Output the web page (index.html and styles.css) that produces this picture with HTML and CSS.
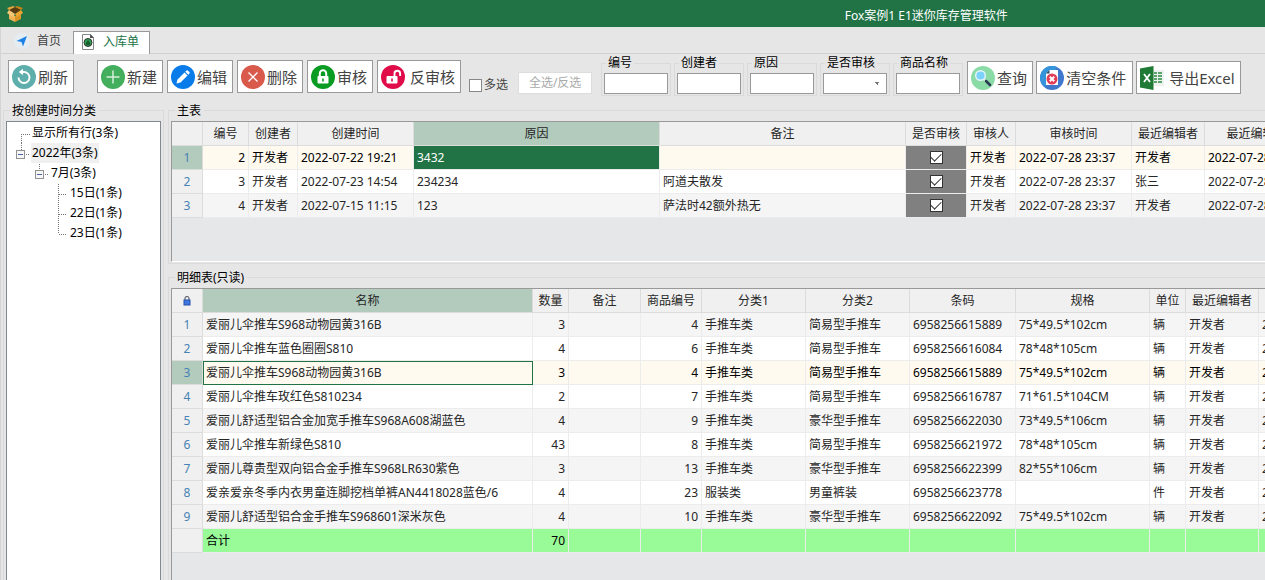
FILE: index.html
```html
<!DOCTYPE html>
<html lang="zh-CN">
<head>
<meta charset="utf-8">
<title>Fox案例1 E1迷你库存管理软件</title>
<link rel="stylesheet" href="styles.css">
</head>
<body>
<header class="titlebar">
  <svg class="app-icon" width="16" height="16" viewBox="0 0 16 16"><path d="M2 7l6 3v6l-6-3z" fill="#f0b455"/><path d="M8 10l6-3v6l-6 3z" fill="#d99425"/><path d="M2 4l6-3 6 3-6 4z" fill="#5a3a10"/><path d="M2 4l6 4-2 3-6-4z" fill="#f8c878"/><path d="M14 4L8 8l2 3 6-4z" fill="#eba52f"/><path d="M2 4L0 2l6-2 2 1z" fill="#e9a63c"/><path d="M14 4l2-2-6-2-2 1z" fill="#c98218"/></svg>
  <h1 class="app-title">Fox案例1 E1迷你库存管理软件</h1>
</header>
<div class="window">
  <nav class="tabs">
    <button class="tab"><svg width="16" height="16" viewBox="0 0 16 16"><circle cx="8" cy="8" r="8" fill="#e6edf2"/><path d="M13 3L2.500 8l5 1 1.500 4.500z" fill="#1c82e8"/></svg>首页</button>
    <button class="tab active"><svg width="16" height="16" viewBox="0 0 16 16"><path d="M2.500.5h8l3 3v12h-11z" fill="#fff" stroke="#888"/><path d="M10 0l4 4h-4z" fill="#555"/><circle cx="8" cy="8.500" r="4" fill="#2f9e4f" stroke="#333"/><path d="M6 9l2-3 2 3v2H6z" fill="#165c2e"/></svg>入库单</button>
  </nav>
  <div class="toolbar">
    <button class="btn"><svg width="24" height="24" viewBox="0 0 24 24"><circle cx="12" cy="12" r="12" fill="#5eaeab"/><path d="M6.500 12.500a5.500 5.500 0 1 0 5.500-5.500H9.500" fill="none" stroke="#fff" stroke-width="1.900"/><path d="M11 3.800L6.800 7 11 10.200z" fill="#fff"/></svg>刷新</button>
    <button class="btn first-edit"><svg width="24" height="24" viewBox="0 0 24 24"><circle cx="12" cy="12" r="12" fill="#43ae5c"/><path d="M12 5.500v13M5.500 12h13" stroke="#d6f0dc" stroke-width="1.500"/></svg>新建</button>
    <button class="btn"><svg width="24" height="24" viewBox="0 0 24 24"><circle cx="12" cy="12" r="12" fill="#0a7cea"/><path d="M5.500 18.500l1-4 7-7 3 3-7 7zM14.300 6.700l1.200-1.200q.8-.5 1.500.2l1.400 1.400q.6.7.1 1.400l-1.200 1.200z" fill="#fff"/></svg>编辑</button>
    <button class="btn"><svg width="24" height="24" viewBox="0 0 24 24"><circle cx="12" cy="12" r="12" fill="#d9594a"/><path d="M7.500 7.500l9 9M16.500 7.500l-9 9" stroke="#fff" stroke-width="1.300"/></svg>删除</button>
    <button class="btn"><svg width="24" height="24" viewBox="0 0 24 24"><circle cx="12" cy="12" r="12" fill="#0a9b22"/><rect x="6.500" y="11" width="11" height="7.500" rx="1" fill="#fff"/><path d="M8.800 11V8.500a3.200 3.200 0 0 1 6.400 0V11" fill="none" stroke="#fff" stroke-width="2"/><path d="M12 13.500v3" stroke="#0a9b22" stroke-width="1.600"/></svg>审核</button>
    <button class="btn roomy"><svg width="24" height="24" viewBox="0 0 24 24"><circle cx="12" cy="12" r="12" fill="#df0c49"/><rect x="5.500" y="11" width="11" height="7.500" rx="1" fill="#fff"/><path d="M13.500 11V8.500a2.800 2.800 0 0 1 5.600 0V11" fill="none" stroke="#fff" stroke-width="1.900"/><path d="M11 13.500v3" stroke="#df0c49" stroke-width="1.600"/></svg>反审核</button>
    <label class="multi"><input type="checkbox" class="box">多选</label>
    <button class="btn-small" disabled>全选/反选</button>
    <div class="fields">
      <div class="field"><label for="f-no">编号</label><input id="f-no" type="text"></div>
      <div class="field"><label for="f-creator">创建者</label><input id="f-creator" type="text"></div>
      <div class="field"><label for="f-reason">原因</label><input id="f-reason" type="text"></div>
      <div class="field"><label for="f-audit">是否审核</label><select id="f-audit"><option></option></select></div>
      <div class="field"><label for="f-name">商品名称</label><input id="f-name" type="text"></div>
    </div>
    <div class="queries">
      <button class="btn"><svg width="24" height="24" viewBox="0 0 24 24"><circle cx="12" cy="12" r="12" fill="#8bdba6"/><path d="M13.500 13.500l2 2" stroke="#fff" stroke-width="2"/><path d="M15 15l4 4" stroke="#2b3d55" stroke-width="2.600" stroke-linecap="round"/><circle cx="9.500" cy="9.500" r="4.800" fill="#7cd2fa" stroke="#e6f5fb" stroke-width="1.400"/></svg>查询</button>
      <button class="btn clear"><svg width="24" height="24" viewBox="0 0 24 24"><circle cx="12" cy="12" r="12" fill="#3f78cc"/><path d="M0 12A12 12 0 0 1 17 1L5 21A12 12 0 0 1 0 12z" fill="#3594da"/><path d="M9.500 4H18v15H6V7.500z" fill="#fff"/><path d="M6 7.500h3.500V4z" fill="#31475e"/><circle cx="12" cy="13" r="5.500" fill="#e33d55"/><path d="M9.800 10.800l4.400 4.400M14.200 10.800l-4.400 4.400" stroke="#fff" stroke-width="2"/></svg>清空条件</button>
      <button class="btn roomy"><svg width="24" height="24" viewBox="0 0 24 24"><path d="M13 4h11v16H13z" fill="#edf2ee"/><path d="M14 7h3M14 10h3M14 13h3M14 16h3M18 7h4M18 10h4M18 13h4M18 16h4" stroke="#2a8a42" stroke-width="1.500"/><path d="M0 2.500L13.500 0v24L0 21.500z" fill="#1f7a35"/><path d="M4 8l6 8M10 8l-6 8" stroke="#fff" stroke-width="1.800"/></svg>导出Excel</button>
    </div>
  </div>
  <main class="content">
    <section class="group side">
      <h2>按创建时间分类</h2>
      <div class="tree">
        <div class="node"><svg width="24" height="20"><path d="M14.500 11v9M14 11.500h9" class="dots"/></svg><span>显示所有行(3条)</span></div>
        <div class="node selected"><svg width="24" height="20"><path d="M14.500 0v7M19 11.500h4" class="dots"/><rect x="9.500" y="7.500" width="8" height="8" class="toggle"/><path d="M11 11.500h5" class="minus"/></svg><span>2022年(3条)</span></div>
        <div class="node"><svg width="43" height="20"><path d="M32.500 1v6M38 11.500h4" class="dots"/><rect x="28.500" y="7.500" width="8" height="8" class="toggle"/><path d="M30 11.500h5" class="minus"/></svg><span>7月(3条)</span></div>
        <div class="node"><svg width="62" height="20"><path d="M51.500 1v19M52 11.500h8" class="dots"/></svg><span>15日(1条)</span></div>
        <div class="node"><svg width="62" height="20"><path d="M51.500 1v19M52 11.500h8" class="dots"/></svg><span>22日(1条)</span></div>
        <div class="node"><svg width="62" height="20"><path d="M51.500 1v10M52 11.500h8" class="dots"/></svg><span>23日(1条)</span></div>
      </div>
    </section>
    <div class="tables">
      <section class="group">
        <h2>主表</h2>
        <div class="grid main-grid">
          <table class="t-main">
            <colgroup><col class="w31"><col class="w46"><col class="w49"><col class="w116"><col class="w246"><col class="w246"><col class="w61"><col class="w49"><col class="w116"><col class="w73"><col class="w116"></colgroup>
            <thead><tr><th></th><th>编号</th><th>创建者</th><th>创建时间</th><th class="on">原因</th><th>备注</th><th>是否审核</th><th>审核人</th><th>审核时间</th><th>最近编辑者</th><th>最近编辑时间</th></tr></thead>
            <tbody>
            <tr class="current"><th>1</th><td class="n">2</td><td>开发者</td><td>2022-07-22 19:21</td><td class="cell-on">3432</td><td></td><td class="chk"><input type="checkbox" class="box" aria-label="是否审核" checked></td><td>开发者</td><td>2022-07-28 23:37</td><td>开发者</td><td>2022-07-28 23:37</td></tr>
            <tr><th>2</th><td class="n">3</td><td>开发者</td><td>2022-07-23 14:54</td><td>234234</td><td>阿道夫散发</td><td class="chk"><input type="checkbox" class="box" aria-label="是否审核" checked></td><td>开发者</td><td>2022-07-28 23:37</td><td>张三</td><td>2022-07-28 23:37</td></tr>
            <tr class="alt"><th>3</th><td class="n">4</td><td>开发者</td><td>2022-07-15 11:15</td><td>123</td><td>萨法时42额外热无</td><td class="chk"><input type="checkbox" class="box" aria-label="是否审核" checked></td><td>开发者</td><td>2022-07-28 23:37</td><td>开发者</td><td>2022-07-28 23:37</td></tr>
            </tbody>
          </table>
        </div>
      </section>
      <section class="group detail">
        <h2>明细表(只读)</h2>
        <div class="grid">
          <table class="t-detail">
            <colgroup><col class="w31"><col class="w330"><col class="w36"><col class="w72"><col class="w61"><col class="w104"><col class="w104"><col class="w106"><col class="w134"><col class="w36"><col class="w73"><col class="w116"></colgroup>
            <thead><tr><th><svg class="lock" width="8" height="10" viewBox="0 0 8 10"><path d="M2 5V2.500a2 2 0 0 1 4 0V5" fill="none" stroke="#667" stroke-width="1.200"/><rect x="1" y="4" width="6" height="5" fill="#3f78e0" stroke="#2450a8"/></svg></th><th class="on">名称</th><th>数量</th><th>备注</th><th>商品编号</th><th>分类1</th><th>分类2</th><th>条码</th><th>规格</th><th>单位</th><th>最近编辑者</th><th></th></tr></thead>
            <tbody>
            <tr class="alt"><th>1</th><td>爱丽儿伞推车S968动物园黄316B</td><td class="n">3</td><td></td><td class="n">4</td><td>手推车类</td><td>简易型手推车</td><td>6958256615889</td><td>75*49.5*102cm</td><td>辆</td><td>开发者</td><td>2022-07-28</td></tr>
            <tr><th>2</th><td>爱丽儿伞推车蓝色圈圈S810</td><td class="n">4</td><td></td><td class="n">6</td><td>手推车类</td><td>简易型手推车</td><td>6958256616084</td><td>78*48*105cm</td><td>辆</td><td>开发者</td><td>2022-07-28</td></tr>
            <tr class="current"><th>3</th><td class="focus">爱丽儿伞推车S968动物园黄316B</td><td class="n">3</td><td></td><td class="n">4</td><td>手推车类</td><td>简易型手推车</td><td>6958256615889</td><td>75*49.5*102cm</td><td>辆</td><td>开发者</td><td>2022-07-28</td></tr>
            <tr><th>4</th><td>爱丽儿伞推车玫红色S810234</td><td class="n">2</td><td></td><td class="n">7</td><td>手推车类</td><td>简易型手推车</td><td>6958256616787</td><td>71*61.5*104CM</td><td>辆</td><td>开发者</td><td>2022-07-28</td></tr>
            <tr class="alt"><th>5</th><td>爱丽儿舒适型铝合金加宽手推车S968A608湖蓝色</td><td class="n">4</td><td></td><td class="n">9</td><td>手推车类</td><td>豪华型手推车</td><td>6958256622030</td><td>73*49.5*106cm</td><td>辆</td><td>开发者</td><td>2022-07-28</td></tr>
            <tr><th>6</th><td>爱丽儿伞推车新绿色S810</td><td class="n">43</td><td></td><td class="n">8</td><td>手推车类</td><td>简易型手推车</td><td>6958256621972</td><td>78*48*105cm</td><td>辆</td><td>开发者</td><td>2022-07-28</td></tr>
            <tr class="alt"><th>7</th><td>爱丽儿尊贵型双向铝合金手推车S968LR630紫色</td><td class="n">3</td><td></td><td class="n">13</td><td>手推车类</td><td>豪华型手推车</td><td>6958256622399</td><td>82*55*106cm</td><td>辆</td><td>开发者</td><td>2022-07-28</td></tr>
            <tr><th>8</th><td>爱亲爱亲冬季内衣男童连脚挖档单裤AN4418028蓝色/6</td><td class="n">4</td><td></td><td class="n">23</td><td>服装类</td><td>男童裤装</td><td>6958256623778</td><td></td><td>件</td><td>开发者</td><td>2022-07-28</td></tr>
            <tr class="alt"><th>9</th><td>爱丽儿舒适型铝合金手推车S968601深米灰色</td><td class="n">4</td><td></td><td class="n">10</td><td>手推车类</td><td>豪华型手推车</td><td>6958256622092</td><td>75*49.5*102cm</td><td>辆</td><td>开发者</td><td>2022-07-28</td></tr>
            </tbody>
            <tfoot><tr class="total"><th></th><td>合计</td><td class="n">70</td><td></td><td></td><td></td><td></td><td></td><td></td><td></td><td></td><td></td></tr></tfoot>
          </table>
        </div>
      </section>
    </div>
  </main>
</div>
</body>
</html>
```
FILE: styles.css
```css
* { box-sizing: border-box; }
body {
  margin: 0;
  height: 100vh;
  display: flex;
  flex-direction: column;
  overflow: hidden;
  background: #e6e6e6;
  color: #262626;
  font: 12px/16px "Noto Sans", "Noto Sans CJK SC", sans-serif;
}
button, input, select { font: inherit; color: inherit; margin: 0; }
svg { display: block; flex: none; }
h1, h2 { margin: 0; font-size: 12px; font-weight: 400; }

.titlebar {
  display: flex;
  flex: none;
  align-items: center;
  height: 27px;
  padding-left: 7px;
  background: #217346;
}
.app-title {
  margin-left: 65%;
  padding: 4px 0 0 4px;
  color: #fff;
  white-space: nowrap;
}

.window {
  flex: 1;
  min-height: 0;
  display: flex;
  flex-direction: column;
  border-left: 1px solid #d4d4d4;
}
.tabs {
  display: flex;
  flex: none;
  align-items: flex-end;
  height: 27px;
  padding-left: 1px;
  border-bottom: 1px solid #d0d0d0;
}
.tab {
  display: flex;
  align-items: center;
  gap: 7px;
  height: 23px;
  padding: 0 12px 2px;
  border: 0;
  background: none;
  color: #444;
}
.tab.active {
  margin-bottom: -1px;
  padding: 0 10px 2px 6px;
  border: 1px solid #999;
  border-bottom: 0;
  background: #fff;
  color: #217346;
}

.toolbar {
  display: flex;
  flex: none;
  align-items: flex-start;
  padding: 6px 7px 0;
  white-space: nowrap;
}
.btn {
  display: flex;
  flex: none;
  align-items: center;
  gap: 2px;
  height: 33px;
  margin-right: 4px;
  padding: 0 5px 0 3px;
  border: 1px solid #999;
  background: #fff;
  color: #444;
  font-size: 15px;
}
.first-edit { margin-left: 19px; }
.roomy { gap: 5px; }
.box {
  appearance: none;
  display: grid;
  place-items: center;
  flex: none;
  width: 13px;
  height: 13px;
  border: 1px solid #888;
  background: #fff;
}
.multi {
  display: flex;
  align-items: center;
  gap: 2px;
  margin: 17px 10px 0 4px;
  color: #444;
}
.btn-small {
  flex: none;
  width: 74px;
  height: 22px;
  margin: 12px 9px 0 0;
  padding: 0;
  border: 1px solid #ddd;
  background: #fff;
  color: #aaa;
}
.fields { display: flex; gap: 3px; margin: 3px 4px 0 0; }
.field {
  display: flex;
  flex-direction: column;
  align-items: flex-start;
  width: 70px;
  padding: 0 2px 1px;
  border: 1px solid #dadada;
}
.field label {
  margin: -8px 0 3px 2px;
  padding: 0 2px;
  background: #e6e6e6;
  color: #000;
  line-height: 14px;
}
.field input, .field select {
  width: 100%;
  height: 21px;
  padding: 0 2px;
  border: 1px solid #999;
  border-radius: 0;
  background: #fff;
}
.field select {
  appearance: none;
  background: #fff conic-gradient(from -45deg at 50% 100%, #777 90deg, transparent 0) no-repeat right 6px top 8px / 6px 3px;
}
.queries { display: flex; margin-top: 1px; }
.queries .btn { margin-right: 3px; }
.clear { padding-right: 6px; }

.content {
  flex: 1;
  min-height: 0;
  display: flex;
  gap: 4px;
  padding: 14px 0 0 2px;
}
.group {
  display: flex;
  flex-direction: column;
  border: 1px solid #dadada;
  padding: 0 2px 1px;
}
.group h2 {
  align-self: flex-start;
  margin: -8px 0 2px 4px;
  padding: 0 3px 0 2px;
  background: #e6e6e6;
  color: #000;
}
.side { flex: none; width: 161px; padding-bottom: 0; border-bottom: 0; }
.tree {
  flex: 1;
  width: 155px;
  border: 1px solid #828790;
  border-bottom: 0;
  background: #fff;
  color: #000;
}
.node { display: flex; height: 20px; line-height: 20px; }
.node:first-child { margin-top: 1px; }
.node span { padding: 0 1px; }
.selected span { background: #f0f0f0; }
.dots { fill: none; stroke: #777; stroke-dasharray: 1 1; }
.toggle { fill: #f7f7f7; stroke: #919191; }
.minus { stroke: #4b63a7; }

.tables {
  flex: 1;
  min-width: 0;
  display: flex;
  flex-direction: column;
  gap: 13px;
}
.tables .group { border-right: 0; padding-right: 0; }
.tables .detail { flex: 1; min-height: 0; padding-bottom: 0; border-bottom: 0; }
.grid {
  flex: 1;
  min-height: 0;
  overflow: hidden;
  border: 1px solid #999;
  border-width: 1px 0 0 1px;
  background: #e6e7e9;
}
.main-grid { min-height: 141px; border-bottom: 1px solid #fff; }

table { border-collapse: separate; border-spacing: 0; table-layout: fixed; }
.t-main { width: 1149px; }
.t-detail { width: 1203px; }
.w31 { width: 31px; }
.w36 { width: 36px; }
.w46 { width: 46px; }
.w49 { width: 49px; }
.w61 { width: 61px; }
.w72 { width: 72px; }
.w73 { width: 73px; }
.w104 { width: 104px; }
.w106 { width: 106px; }
.w116 { width: 116px; }
.w134 { width: 134px; }
.w246 { width: 246px; }
.w330 { width: 330px; }
th, td {
  height: 24px;
  padding: 0 3px;
  border: 0 solid #ececec;
  border-width: 0 1px 1px 0;
  background: #fff;
  font-weight: 400;
  line-height: 23px;
  text-align: left;
  white-space: nowrap;
  overflow: hidden;
}
th { border-color: #dcdcdc; background: #f0f0f0; text-align: center; }
tbody th { color: #4682b4; }
.n { text-align: right; }
.alt td { background: #f5f5f5; }
.current td { background: #fffaf0; color: #000; }
.on, .current th { background: #b2cbbd; }
.current .cell-on { background: #217346; color: #fff; }
.current .focus { padding-left: 2px; border: 1px solid #217346; line-height: 22px; color: #262626; }
tr .chk.chk { background: #808080; }
.chk .box { margin: auto; border-color: #333; }
.box:checked::before {
  content: "";
  width: 9px;
  height: 5px;
  margin-top: -3px;
  border: solid #333;
  border-width: 0 0 1px 1px;
  transform: rotate(-45deg);
}
.lock { margin: auto; }
.total td { background: #98fb98; color: #000; }
```
